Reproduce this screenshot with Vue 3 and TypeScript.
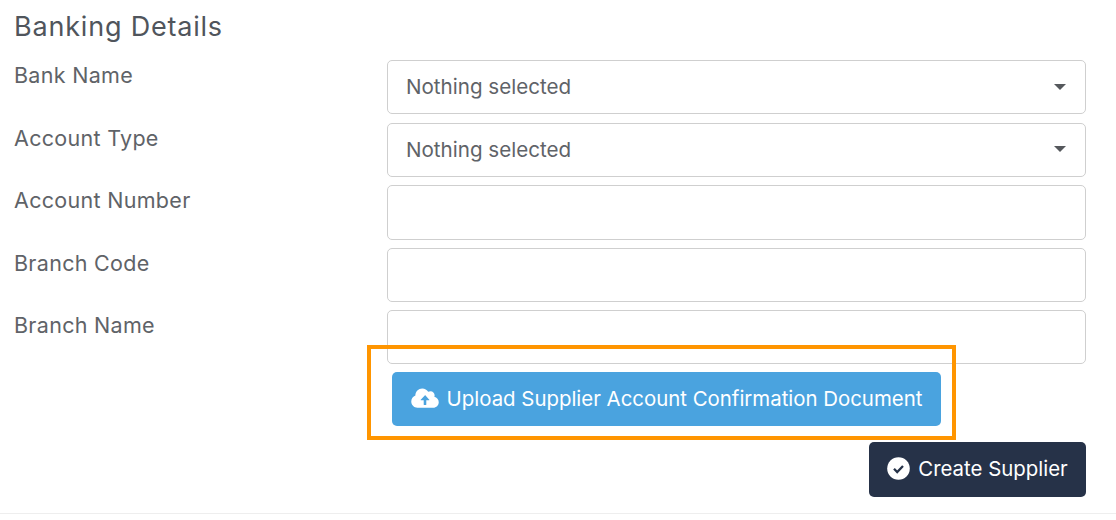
<script setup lang="ts">
const rows: { label: string; select: boolean }[] = [
  { label: 'Bank Name', select: true },
  { label: 'Account Type', select: true },
  { label: 'Account Number', select: false },
  { label: 'Branch Code', select: false },
  { label: 'Branch Name', select: false },
]
</script>

<template>
  <div class="page">
    <h2 class="title">Banking Details</h2>
    <div class="rows">
      <div v-for="r in rows" :key="r.label" class="row">
        <label class="label">{{ r.label }}</label>
        <div class="control">
          <span v-if="r.select">Nothing selected</span>
          <i v-if="r.select" class="caret"></i>
        </div>
      </div>
    </div>
    <div class="upload-wrap">
      <button class="btn upload">
        <svg class="cloud" width="28" height="22" viewBox="0 0 640 512">
          <path fill="#fff" d="M537.6 226.6c4.1-10.7 6.4-22.4 6.4-34.6 0-53-43-96-96-96-19.7 0-38.1 6-53.3 16.2C367 64.2 315.3 32 256 32c-88.4 0-160 71.6-160 160 0 2.7.1 5.4.2 8.1C40.2 219.8 0 273.2 0 336c0 79.5 64.5 144 144 144h368c70.7 0 128-57.3 128-128 0-61.9-44-113.6-102.4-125.4z"/>
          <path fill="#4aa3df" d="M320 190l-100 104a9 9 0 0 0 7 15h63v99a12 12 0 0 0 12 12h36a12 12 0 0 0 12-12v-99h63a9 9 0 0 0 7-15L327 190a5 5 0 0 0-7 0z"/>
        </svg>
        <span>Upload Supplier Account Confirmation Document</span>
      </button>
      <div class="highlight"></div>
    </div>
    <div class="actions">
      <button class="btn create">
        <svg class="check" width="23" height="23" viewBox="0 0 23 23">
          <circle cx="11.5" cy="11.5" r="11.3" fill="#fff"/>
          <path d="M7 11.8l3.2 3.2 5.8-6" fill="none" stroke="#263248" stroke-width="2.3"/>
        </svg>
        <span>Create Supplier</span>
      </button>
    </div>
    <div class="rule"></div>
  </div>
</template>

<style>
html, body { margin: 0; background: #fff; }
</style>

<style scoped>
.page {
  width: 1116px;
  height: 520px;
  overflow: hidden;
  box-sizing: border-box;
  padding-top: 8px;
  font-family: Inter, "Noto Sans", sans-serif;
  color: #5f6368;
}
.title {
  margin: 0 0 0 14px;
  height: 52px;
  font-size: 27px;
  letter-spacing: 0.8px;
  line-height: 37px;
  font-weight: 400;
  color: #50555c;
}
.rows {
  display: flex;
  flex-direction: column;
  gap: 8.5px;
  padding: 0 30px 0 14px;
}
.row {
  display: flex;
  height: 54px;
}
.row:nth-child(3) .control {
  height: 54.6px;
}
.label {
  width: 373px;
  font-size: 21.5px;
  letter-spacing: 0.3px;
  line-height: 31px;
}
.control {
  flex: 1;
  box-sizing: border-box;
  height: 54px;
  display: flex;
  align-items: center;
  justify-content: space-between;
  padding: 0 19px 1px 18px;
  border: 1px solid #cfcfcf;
  border-radius: 5px;
  font-size: 20.6px;
  color: #5f6368;
}
.caret {
  width: 0;
  height: 0;
  border-left: 6px solid transparent;
  border-right: 6px solid transparent;
  border-top: 6px solid #55585c;
}
.upload-wrap {
  position: relative;
  margin: 8px 0 0 392px;
  width: 549px;
  height: 54px;
}
.btn {
  display: flex;
  align-items: center;
  justify-content: center;
  border: 0;
  border-radius: 5px;
  color: #fff;
  font-family: inherit;
  font-size: 20.4px;
  padding: 0 0 2px;
}
.upload {
  width: 100%;
  height: 100%;
  gap: 8px;
  background: #4aa3df;
}
.highlight {
  position: absolute;
  left: -25px;
  top: -27px;
  width: 581px;
  height: 87px;
  border: 4px solid #ff9500;
}
.actions {
  display: flex;
  justify-content: flex-end;
  padding: 16px 30px 0 0;
}
.create {
  width: 217px;
  height: 55px;
  gap: 8px;
  background: #263248;
}
.rule {
  margin-top: 16px;
  height: 1px;
  background: #eeeeee;
}
</style>
